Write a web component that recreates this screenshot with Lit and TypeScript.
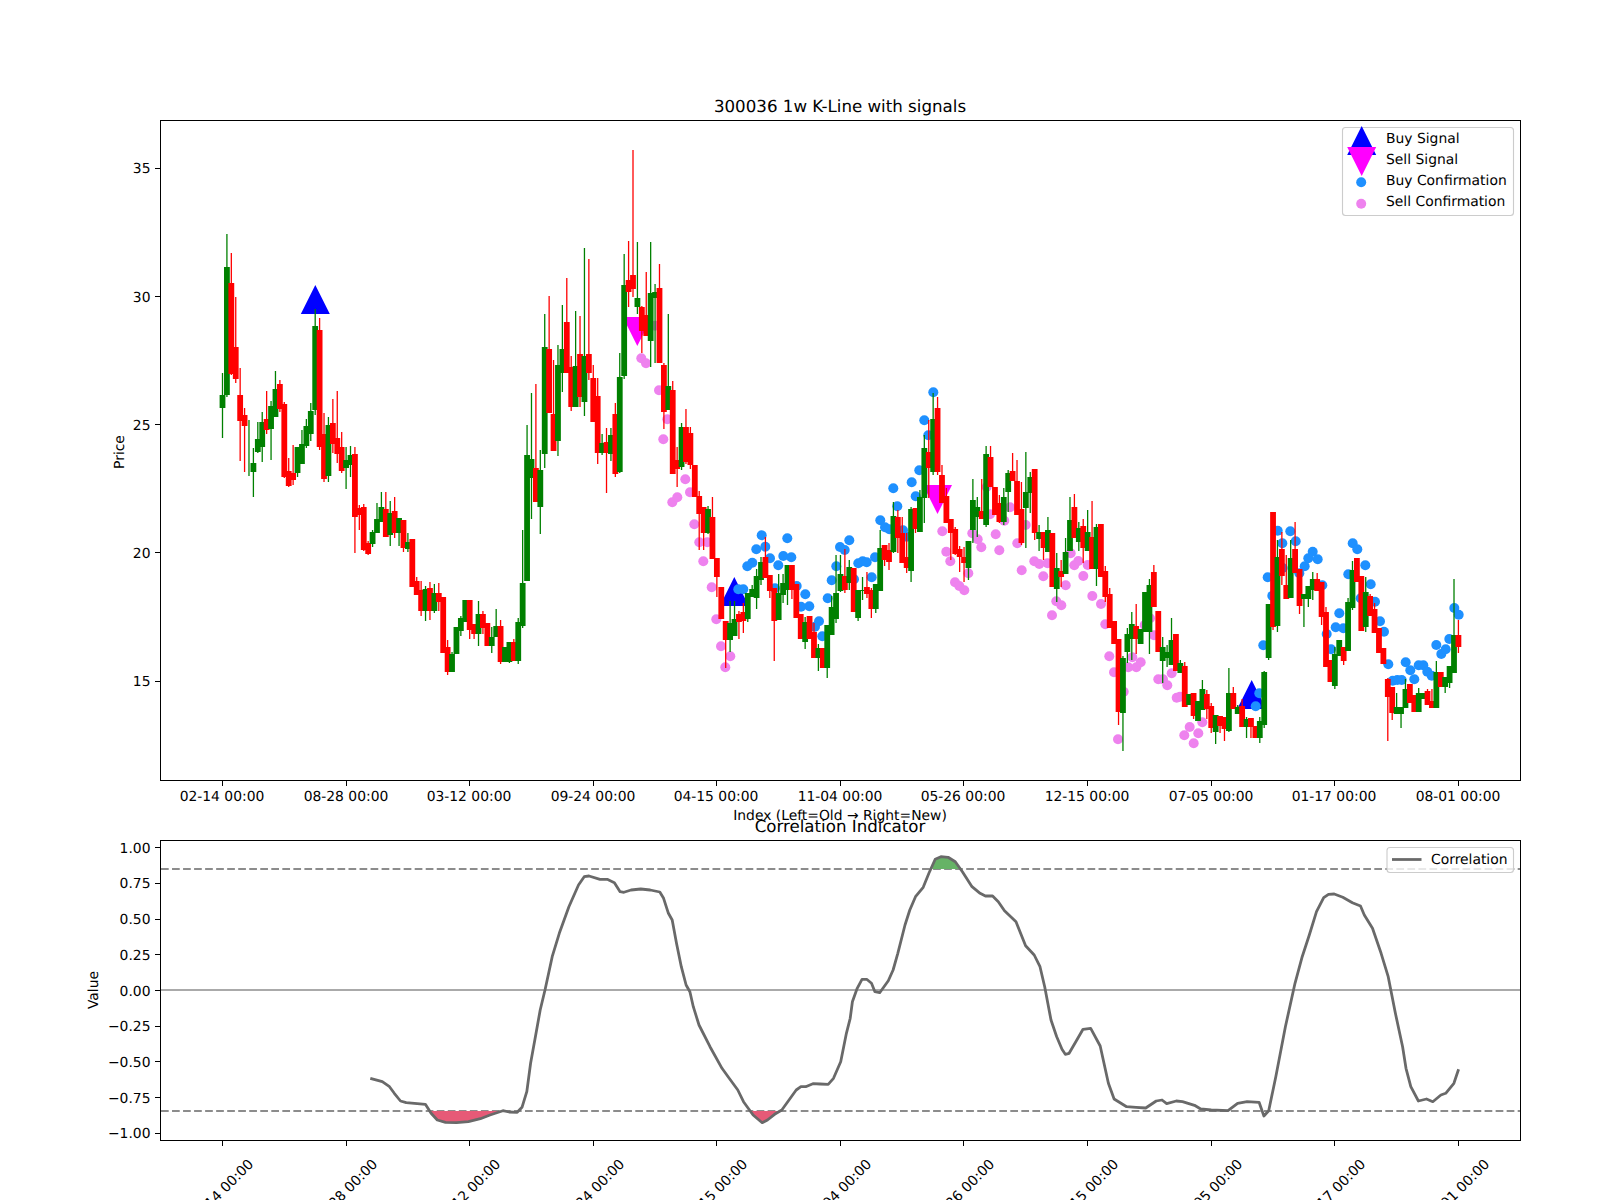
import { LitElement, html, svg, css } from 'lit'
import { customElement } from 'lit/decorators.js'

const G = 'green'
const R = 'red'

/** One weekly bar: colour, then high / body top / body bottom / low as chart y pixels. */
type Bar = [string, number, number, number, number]

const BARS: Bar[] = [
  [G,373,395,408,438],[G,234,267,395,397],[R,253,283,374,375],[R,297,347,379,383],[R,368,395,421,461],
  [R,408,415,426,472],[G,420,449,449,476],[G,448,463,472,497],[G,422,439,452,453],[G,412,422,447,462],
  [R,391,419,430,434],[G,401,406,429,460],[G,371,389,417,417],[R,380,384,409,412],[R,402,404,477,478],
  [R,458,471,486,487],[R,445,473,480,485],[G,447,447,473,477],[G,430,444,464,464],[G,419,426,446,448],
  [G,403,411,434,441],[G,309,326,410,415],[R,318,330,447,450],[R,413,434,479,482],[G,417,425,476,482],
  [R,399,423,444,453],[R,391,438,454,463],[R,432,447,471,473],[G,447,460,468,489],[G,446,455,465,477],
  [R,447,454,517,553],[R,505,508,515,530],[R,504,507,550,551],[R,541,543,554,555],[G,530,532,544,547],
  [G,503,519,533,533],[G,492,507,522,522],[R,492,509,537,537],[G,501,513,535,546],[R,497,511,533,538],
  [G,518,518,533,546],[R,520,520,548,552],[G,533,542,549,552],[R,539,539,587,587],[R,577,581,595,595],
  [R,581,590,611,616],[G,586,589,611,621],[R,582,588,611,620],[G,584,593,611,613],[R,583,593,602,611],
  [R,597,597,653,653],[R,640,647,672,675],[G,652,654,672,672],[G,627,627,654,654],[G,616,618,631,636],
  [G,600,600,622,622],[R,600,600,630,639],[R,624,624,634,639],[G,601,614,634,646],[R,611,614,628,634],
  [R,623,623,646,646],[G,627,637,646,653],[G,609,626,637,637],[R,620,626,662,664],[G,647,647,662,662],
  [G,642,642,662,663],[R,639,642,661,661],[G,618,622,661,664],[G,530,583,626,628],[G,425,455,581,581],
  [G,393,459,478,519],[R,384,468,502,502],[G,450,470,507,534],[G,314,347,454,468],[R,296,349,413,413],
  [R,360,414,451,451],[G,345,365,441,456],[G,305,349,373,392],[R,278,322,373,373],[R,356,367,407,411],
  [G,311,366,407,407],[R,316,354,397,407],[G,248,356,402,416],[R,259,354,373,380],[R,365,378,422,422],
  [R,378,396,453,464],[G,434,443,453,455],[R,428,442,453,493],[G,428,435,454,461],[R,403,414,474,477],
  [G,353,377,472,473],[G,254,285,376,379],[R,241,280,292,307],[R,150,275,289,297],[G,242,298,307,314],
  [R,306,307,331,353],[R,272,315,336,336],[G,242,293,341,367],[G,284,292,298,363],[R,264,288,363,363],
  [R,363,365,412,429],[G,314,386,410,410],[R,381,390,474,474],[R,447,460,469,487],[G,423,427,467,470],
  [R,409,427,462,464],[R,427,433,465,469],[R,465,465,497,497],[R,491,496,514,550],[R,507,507,533,550],
  [G,506,509,533,534],[R,497,517,559,559],[R,558,558,577,597],[R,587,587,619,619],[R,621,621,640,668],
  [G,601,623,640,652],[G,601,619,636,636],[R,611,614,622,639],[R,603,612,621,633],[G,593,593,619,622],
  [G,585,589,597,597],[G,569,576,598,609],[G,557,562,580,585],[R,537,557,578,578],[R,575,575,591,598],
  [R,588,588,621,661],[G,574,593,620,620],[G,574,583,595,603],[G,565,565,590,605],[R,565,565,590,599],
  [R,584,584,618,618],[R,614,614,639,639],[G,617,622,642,649],[R,616,616,639,639],[R,623,632,658,658],
  [G,644,648,658,671],[R,648,648,668,668],[G,625,625,668,678],[G,596,607,635,635],[G,555,593,619,623],
  [G,555,574,591,592],[R,549,576,590,593],[G,560,567,583,590],[R,568,568,612,612],[G,590,590,618,621],
  [G,577,590,591,600],[R,572,587,594,598],[R,588,590,609,618],[G,584,584,609,613],[G,530,548,591,591],
  [R,545,545,560,566],[R,543,550,562,570],[G,502,516,552,553],[R,510,517,538,553],[R,517,533,563,563],
  [R,533,557,568,573],[G,507,509,571,582],[R,508,508,529,533],[G,490,497,532,532],[G,435,448,498,523],
  [R,420,452,468,498],[G,393,419,472,475],[R,397,408,472,475],[R,465,475,503,503],[R,488,496,523,523],
  [R,519,519,533,560],[R,527,529,554,555],[R,546,549,557,572],[R,547,557,563,582],[G,541,541,568,580],
  [G,479,500,530,543],[G,497,507,517,537],[R,479,511,519,519],[G,446,454,525,527],[R,446,457,487,487],
  [R,487,487,515,515],[R,495,503,522,523],[G,488,497,522,525],[G,470,473,492,512],[R,453,471,481,481],
  [R,460,481,515,515],[R,482,509,543,545],[G,452,492,508,548],[G,472,477,493,513],[R,469,469,533,540],
  [G,525,532,539,551],[R,532,532,548,560],[G,517,530,552,552],[R,533,533,587,587],[G,553,568,589,602],
  [R,560,571,577,587],[G,538,552,574,574],[G,497,520,551,551],[R,494,507,538,538],[G,522,528,542,551],
  [R,519,526,548,563],[G,510,532,551,551],[R,501,537,569,569],[G,524,527,569,586],[R,524,524,577,577],
  [R,566,571,597,602],[R,588,594,628,628],[R,621,621,644,644],[R,639,639,712,725],[G,656,658,713,751],
  [G,628,634,652,663],[G,612,624,639,660],[R,604,626,639,654],[G,629,629,644,644],[G,592,592,632,632],
  [G,579,585,632,654],[R,565,572,607,607],[R,611,611,652,652],[G,637,647,661,683],[G,645,652,658,667],
  [G,618,640,665,665],[R,634,634,671,671],[G,660,663,673,673],[R,662,666,707,707],[G,694,694,705,705],
  [R,693,693,716,719],[G,701,701,721,721],[G,680,689,710,710],[R,690,694,709,719],[R,703,706,728,733],
  [G,715,715,732,744],[R,716,716,726,733],[R,717,717,729,741],[G,668,693,731,732],[R,687,693,709,709],
  [G,705,707,714,714],[R,699,706,727,727],[G,717,719,727,738],[R,718,718,727,738],[R,726,726,738,738],
  [G,717,721,738,743],[G,671,672,725,728],[G,604,604,658,660],[R,512,512,627,630],[G,540,557,626,632],
  [R,532,549,576,585],[R,555,585,599,599],[G,540,558,598,598],[R,522,549,573,573],[R,569,569,606,614],
  [G,594,594,599,627],[G,586,586,599,607],[G,572,579,590,600],[R,573,579,591,591],[R,582,582,617,625],
  [R,607,612,667,667],[R,660,660,682,682],[G,647,654,686,689],[G,640,640,656,656],[R,647,647,661,665],
  [G,598,602,651,651],[G,561,570,608,610],[R,558,558,582,582],[R,576,576,631,631],[G,577,592,627,632],
  [R,594,596,616,616],[R,603,609,633,633],[R,628,628,653,653],[R,648,648,664,664],[R,678,679,697,741],
  [R,687,687,713,720],[G,693,707,714,714],[G,707,707,714,728],[G,679,689,708,708],[R,684,684,703,703],
  [R,695,695,712,712],[G,688,693,712,712],[G,693,693,699,699],[R,689,691,705,705],[R,689,701,708,708],
  [G,661,672,708,708],[R,672,672,687,687],[G,677,677,687,693],[G,666,666,683,688],[G,579,635,673,673],
  [R,620,635,647,653],
]

const BUY_DOTS: [number, number][] = [
  [761.7,535.3],[765.3,546.7],[756.3,549.3],[770,558.3],[752.3,562.7],[747.3,566.3],[787.3,538.3],[783.3,556],
  [791.3,557.3],[778.3,565.3],[775,588.3],[738.3,589.3],[743.3,589.3],[796.7,586],[805.3,594.3],[809.3,606.3],
  [801,606.7],[819,621.3],[815,626.7],[822.3,636.3],[827.7,598.3],[831.7,580.3],[836.3,566.3],[840,547],
  [844.7,550],[849.3,540.3],[854,579.3],[858.3,563.3],[862.7,561.3],[866.7,562.3],[871.7,577.3],[875,557.3],
  [880.3,520.3],[885,527.3],[889.3,529.3],[893.3,488.3],[897.3,506.3],[903,530.3],[906.7,536.7],[911.7,482.3],
  [915.7,496.3],[919.3,470.3],[924.3,420.3],[928.3,435.3],[933.3,392.3],
  [1259.3,693.3],[1255.7,706.3],[1263.3,645.3],[1267.7,577.3],[1272.3,595.7],[1277.7,530.7],[1282.3,543.3],
  [1290.3,531.3],[1295.7,541.3],[1282.7,568],[1299.3,573.3],[1304.7,566.3],[1308.3,558.3],[1312.7,551.7],
  [1317.7,559.3],[1322.3,585.3],[1326.7,634],[1331,649.3],[1335.7,627.3],[1339.3,613.3],[1343.3,628.3],
  [1348.3,574.3],[1352.7,543.3],[1357.3,549.3],[1360.7,598.3],[1365.3,565.3],[1370.7,584.3],[1375,601.7],
  [1380,621.3],[1384,631.7],[1388.3,664.3],[1392.7,680.7],[1397.3,680],[1401.7,680],[1405.7,662.3],
  [1410.3,670.3],[1414.3,679.3],[1418.7,665.3],[1423.3,665.3],[1427.3,671.7],[1431.7,675.7],[1436.3,645],
  [1441.3,654],[1445.7,649.3],[1449.3,639],[1454.3,608],[1458.7,614.7],
]

const SELL_DOTS: [number, number][] = [
  [641.3,358.3],[646,363.3],[655,325.7],[659,390.3],[667.3,419.3],[663.3,439.3],[672.3,502.3],[677.3,497.3],
  [685.3,479.3],[690,492.3],[694.3,524.3],[699.3,542.3],[707.3,542.3],[703.3,561.3],[711.7,587.3],[716.3,619.3],
  [721,646.3],[730.3,656.3],[725.3,667.3],
  [942.3,531.3],[946.3,551.7],[950.3,561.3],[955,582.3],[959.3,586],[964.3,590.3],[968.3,573.3],[972.3,533.3],
  [977.7,539.3],[981.3,547.3],[986.7,487],[990,514.3],[995.7,534.3],[999.3,550.3],[1004.3,520.7],[1010,507.3],
  [1017.3,543.3],[1021.7,570.3],[1025.7,525],[1034.3,561.3],[1039.3,564],[1043.3,576.3],[1047.5,563.3],
  [1052,615.3],[1056.3,601.3],[1061.3,605.3],[1065.7,585.3],[1070.7,553.3],[1074.3,565.3],[1078.3,561],
  [1083.3,576],[1087.7,565],[1092.3,596],[1101,604],[1105.3,624.3],[1109.3,656.3],[1114,672.3],[1118,739.3],
  [1123.7,691.7],[1128.3,667.3],[1132.3,657.3],[1136.3,667.3],[1140.7,662.3],[1144.7,625],[1150,618.3],
  [1154,635.3],[1158.3,679.3],[1163,679.3],[1167.3,685.3],[1171.7,673.3],[1176.7,697.7],[1180,696.7],
  [1184.3,735.3],[1189.7,727],[1193.7,743.3],[1198.3,733.3],[1202.3,722.3],
]

// correlation line, x/y in pixels
const CURVE: [number, number][] = [
  [370.3,1078.3],[382.3,1081.7],[389.5,1086.7],[394.3,1093.3],[400.5,1101],[406.2,1102.7],[425.4,1104.3],[431.1,1113.3],
  [437.3,1120],[445.5,1122.3],[456.5,1122.7],[468.4,1121.7],[480.4,1118.7],[490,1115],[502.9,1110.7],[509.1,1112],
  [517.2,1112.3],[522,1107.3],[526.8,1091.7],[530.6,1063.3],[535.4,1036.7],[540.2,1010],[545,990],[552.2,956.7],
  [559.3,933.3],[568.9,906.7],[578.5,885],[584.2,876.7],[589,876],[600,879.3],[607.2,879.3],[614.4,882.7],
  [620.1,891.7],[623.9,892.3],[631.1,890],[640.7,889],[650.2,890],[659.8,892],[663.6,898.3],[668.4,913.3],
  [672.2,920],[676.5,943.3],[681.3,966.7],[686.1,985],[689.9,991.7],[693.3,1006.7],[699,1025],[710,1046.7],
  [722,1068.3],[729.2,1078.3],[737.8,1090],[743.5,1101.7],[753.1,1115],[762.2,1122.7],[767.5,1120],[774.6,1114.3],
  [781.8,1110],[789,1100],[796.2,1090],[800.9,1086.7],[805.7,1086.7],[812.9,1083.7],[820.1,1084],[828.2,1084.3],
  [833.5,1078.3],[840.7,1061.7],[846.4,1033.3],[850.2,1018.3],[852.4,1001.7],[857.2,988.3],[862,979.3],[866.7,979.3],
  [871.5,983.3],[874.9,991.7],[879.7,992.7],[888.3,980.7],[893.1,970],[897.8,953.3],[905,925],[909.8,910],
  [915.5,896.7],[923.2,887.3],[928.9,873.3],[935.2,859.3],[940.9,856.7],[948.1,857.3],[955.3,861.7],[962.4,871.7],
  [972,886.7],[980.1,893.3],[985.4,896],[992.6,896],[998.3,901.7],[1004.5,910.7],[1016,921.7],[1025.6,945.7],
  [1034.2,955],[1040,966.7],[1044.7,986.7],[1051,1020],[1056.7,1036.7],[1062,1049.3],[1065.3,1054.3],
  [1069.1,1053.3],[1075.8,1041.7],[1083,1029.3],[1090.7,1028.3],[1100.2,1046],[1108.4,1083.3],[1114.1,1099],[1126.6,1106.7],
  [1136.1,1107.3],[1145.7,1108],[1156.2,1101],[1162,1100],[1166.7,1103.7],[1176.3,1101],[1182.5,1101.7],[1194.5,1105.3],
  [1200.7,1109],[1211.2,1110],[1228,1110.7],[1237.6,1103.3],[1247.1,1101.7],[1259.1,1102.3],[1263.9,1116],[1268.7,1110.7],
  [1275.8,1076.7],[1285.4,1026.7],[1295,983.3],[1302.2,956.7],[1309.3,935],[1316.5,911.7],[1323.7,897.7],[1328.5,894.3],
  [1334.2,894],[1342.8,897.3],[1352.4,902.7],[1360.5,906],[1364.3,915],[1372.5,928.3],[1381.1,953.3],[1388.2,976.7],
  [1395.4,1013.3],[1402.6,1046.7],[1406,1068.3],[1410.8,1086.7],[1418.4,1101],[1426.5,1099],[1432.8,1101.7],[1440.9,1095],
  [1445.7,1093.3],[1453.9,1083.3],[1458.6,1069.3],
]

const DATES = ['02-14', '08-28', '03-12', '09-24', '04-15', '11-04', '05-26', '12-15', '07-05', '01-17', '08-01']
const PRICE_TICKS = [15, 20, 25, 30, 35]
const VALUE_TICKS = [1, 0.75, 0.5, 0.25, 0, -0.25, -0.5, -0.75, -1]

const barX = (i: number) => 222.5 + 4.414 * i
const tickX = (i: number) => Math.floor(222.4 + 123.6 * i) + 0.5
const priceY = (p: number) => 681 - (p - 15) * 25.63
const valueY = (v: number) => 990.5 - 142.8 * v

const HI_Y = 869
const LO_Y = 1111

const toPath = (pts: [number, number][]) => pts.map(([x, y]) => `${x},${y}`).join(' ')

/** Area between the curve and a threshold line, for the part of the curve in [x0, x1]. */
function band(x0: number, x1: number, limit: number, clamp: (y: number) => number) {
  const pts = CURVE.filter(([x]) => x >= x0 && x <= x1).map(([x, y]): [number, number] => [x, clamp(y)])
  return toPath([[x0, limit], ...pts, [x1, limit]])
}

const up = (x: number, top: number) => `${x},${top} ${x + 14.5},${top + 29} ${x - 14.5},${top + 29}`
const down = (x: number, top: number) => `${x - 14.5},${top} ${x + 14.5},${top} ${x},${top + 29}`

@customElement('app-root')
export class AppRoot extends LitElement {
  static styles = css`
    :host {
      display: block;
      width: 1600px;
      height: 1200px;
      overflow: hidden;
      background: #fff;
    }
    svg {
      display: block;
    }
    text {
      font-family: 'DejaVu Sans', sans-serif;
      font-size: 13.89px;
      fill: #000;
      text-rendering: geometricPrecision;
    }
    text.title {
      font-size: 16.67px;
      text-anchor: middle;
    }
    text.mid {
      text-anchor: middle;
    }
    text.end {
      text-anchor: end;
    }
    .frame {
      fill: none;
      stroke: #000;
      stroke-width: 1.11;
      shape-rendering: crispEdges;
    }
    .tick {
      stroke: #000;
      stroke-width: 1;
      shape-rendering: crispEdges;
    }
    .legend {
      fill: #fff;
      fill-opacity: 0.8;
      stroke: #ccc;
      stroke-width: 1.11;
    }
    .wick {
      stroke-width: 1.3;
    }
    .limit {
      stroke: #8c8c8c;
      stroke-width: 2.08;
      stroke-dasharray: 7.7 3.33;
    }
    .zero {
      stroke: #aaa;
      stroke-width: 2.2;
    }
    .curve {
      fill: none;
      stroke: #696969;
      stroke-width: 2.78;
      stroke-linejoin: round;
    }
    .low {
      fill: #e65a77;
    }
    .high {
      fill: #66b366;
    }
    .buy {
      fill: #1e90ff;
    }
    .sell {
      fill: #ee82ee;
    }
    .tri-buy {
      fill: #00f;
    }
    .tri-sell {
      fill: #f0f;
    }
  `

  private renderCandles() {
    return BARS.map(([c, hi, top, bot, lo], i) => {
      const x = barX(i)
      return svg`
        <line class="wick" x1=${x} x2=${x} y1=${hi} y2=${lo} stroke=${c}></line>
        ${bot > top ? svg`<rect x=${x - 2.9} y=${top} width="5.8" height=${bot - top} fill=${c}></rect>` : ''}
      `
    })
  }

  private renderPriceAxes() {
    return svg`
      ${DATES.map((d, i) => svg`
        <line class="tick" x1=${tickX(i)} x2=${tickX(i)} y1="780.5" y2="785.5"></line>
        <text class="mid" x=${tickX(i) - 0.5} y="801">${d} 00:00</text>
      `)}
      ${PRICE_TICKS.map((p) => svg`
        <line class="tick" x1="155" x2="160.5" y1=${priceY(p)} y2=${priceY(p)}></line>
        <text class="end" x="150.5" y=${priceY(p) + 5}>${p}</text>
      `)}
      <text class="mid" transform="rotate(-90 119.5 452)" x="119.5" y="452" dominant-baseline="central">Price</text>
      <text class="mid" x="840" y="820">Index (Left=Old → Right=New)</text>
      <text class="title" x="840" y="111.5">300036 1w K-Line with signals</text>
    `
  }

  private renderValueAxes() {
    return svg`
      ${DATES.map((d, i) => svg`
        <line class="tick" x1=${tickX(i)} x2=${tickX(i)} y1="1140.5" y2="1145.5"></line>
        <text class="mid" dominant-baseline="central" transform="rotate(-45 ${tickX(i) - 1} 1192)"
          x=${tickX(i) - 1} y="1192">${d} 00:00</text>
      `)}
      ${VALUE_TICKS.map((v) => svg`
        <line class="tick" x1="155" x2="160.5" y1=${valueY(v)} y2=${valueY(v)}></line>
        <text class="end" x="150.5" y=${valueY(v) + 5}>${v.toFixed(2).replace('-', '\u2212')}</text>
      `)}
      <text class="mid" transform="rotate(-90 94 990)" x="94" y="990" dominant-baseline="central">Value</text>
      <text class="title" x="840" y="831.5">Correlation Indicator</text>
    `
  }

  render() {
    return html`
      <svg width="1600" height="1200" viewBox="0 0 1600 1200">
        <!-- signal markers sit under the dots, the candles on top of both -->
        <polygon class="tri-buy" points=${up(315.3, 285)}></polygon>
        <polygon class="tri-buy" points=${up(734.3, 577)}></polygon>
        <polygon class="tri-buy" points=${up(1251.7, 680)}></polygon>
        <polygon class="tri-sell" points=${down(637.3, 317)}></polygon>
        <polygon class="tri-sell" points=${down(937.5, 485)}></polygon>
        ${BUY_DOTS.map(([x, y]) => svg`<circle class="buy" cx=${x} cy=${y} r="5"></circle>`)}
        ${SELL_DOTS.map(([x, y]) => svg`<circle class="sell" cx=${x} cy=${y} r="5"></circle>`)}
        ${this.renderCandles()}
        <rect class="frame" x="160.5" y="120.5" width="1360" height="660"></rect>
        ${this.renderPriceAxes()}

        <rect class="legend" x="1342.5" y="127.5" width="171" height="88" rx="3"></rect>
        <polygon class="tri-buy" points=${up(1361.7, 126)}></polygon>
        <polygon class="tri-sell" points=${down(1361.7, 147)}></polygon>
        <circle class="buy" cx="1361.2" cy="182.3" r="5"></circle>
        <circle class="sell" cx="1361.2" cy="203.7" r="5"></circle>
        <text x="1386" y="143">Buy Signal</text>
        <text x="1386" y="164">Sell Signal</text>
        <text x="1386" y="185">Buy Confirmation</text>
        <text x="1386" y="206">Sell Confirmation</text>

        <line class="limit" x1="161" x2="1520" y1=${HI_Y} y2=${HI_Y}></line>
        <line class="limit" x1="161" x2="1520" y1=${LO_Y} y2=${LO_Y}></line>
        <line class="zero" x1="161" x2="1520" y1="990" y2="990"></line>
        <polygon class="low" points=${band(430, 503, LO_Y, (y) => Math.max(y, LO_Y))}></polygon>
        <polygon class="low" points=${band(751, 782, LO_Y, (y) => Math.max(y, LO_Y))}></polygon>
        <polygon class="high" points=${band(932, 962, HI_Y, (y) => Math.min(y, HI_Y))}></polygon>
        <polyline class="curve" points=${toPath(CURVE)}></polyline>
        <rect class="frame" x="160.5" y="840.5" width="1360" height="300"></rect>
        ${this.renderValueAxes()}

        <rect class="legend" x="1387" y="847.5" width="126.5" height="25" rx="3"></rect>
        <line stroke="#696969" stroke-width="2.78" x1="1392" x2="1421.5" y1="859.5" y2="859.5"></line>
        <text x="1431" y="864">Correlation</text>
      </svg>
    `
  }
}

declare global {
  interface HTMLElementTagNameMap {
    'app-root': AppRoot
  }
}
